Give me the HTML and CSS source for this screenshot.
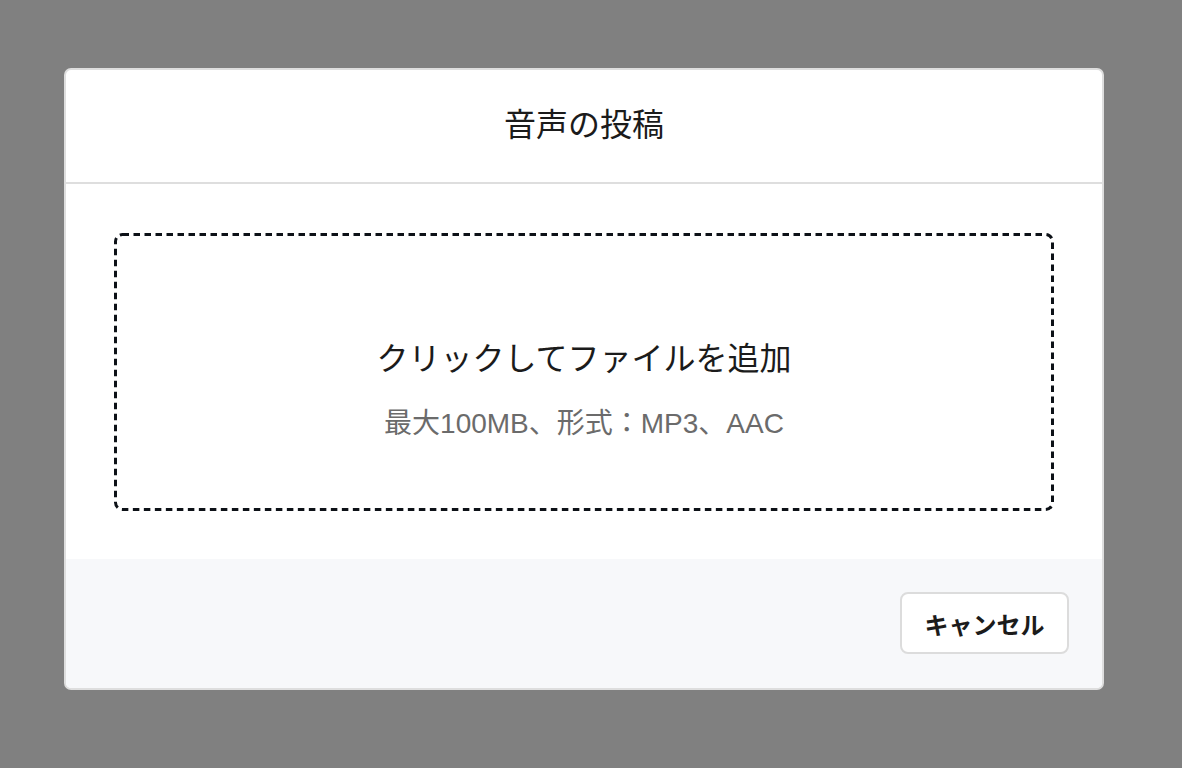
FILE: index.html
```html
<!DOCTYPE html>
<html lang="ja">
<head>
<meta charset="utf-8">
<title>音声の投稿</title>
<link rel="stylesheet" href="styles.css">
</head>
<body>
<div class="modal">
  <div class="modal-header">音声の投稿</div>
  <div class="modal-body">
    <div class="drop">
      <svg class="drop-border" width="940" height="278" viewBox="0 0 940 278" aria-hidden="true">
        <rect x="1.5" y="1.5" width="937" height="275" rx="7" ry="7" fill="none" stroke="#0d1117" stroke-width="3" stroke-dasharray="6.5 4.5"/>
      </svg>
      <div class="drop-title">クリックしてファイルを追加</div>
      <div class="drop-sub">最大100MB、形式：MP3、AAC</div>
    </div>
  </div>
  <div class="modal-footer">
    <button class="btn">キャンセル</button>
  </div>
</div>
</body>
</html>
```
FILE: styles.css
```css
html, body {
  margin: 0;
  padding: 0;
}
body {
  background: #808080;
  width: 1182px;
  height: 768px;
  overflow: hidden;
  font-family: "Liberation Sans", "Noto Sans CJK JP", sans-serif;
  color: #1b1b1b;
}
.modal {
  box-sizing: border-box;
  margin: 68px 0 0 64px;
  width: 1040px;
  height: 622px;
  background: #ffffff;
  border: 2px solid #dedede;
  border-radius: 7px;
  overflow: hidden;
  display: flex;
  flex-direction: column;
}
.modal-header {
  box-sizing: border-box;
  height: 114px;
  padding-bottom: 8px;
  border-bottom: 2px solid #dedede;
  display: flex;
  align-items: center;
  justify-content: center;
  font-size: 32px;
  font-family: "Noto Sans CJK JP", sans-serif;
  color: #1b1b1b;
}
.modal-body {
  padding: 49px 48px 48px 48px;
}
.drop {
  box-sizing: border-box;
  position: relative;
  width: 940px;
  height: 278px;
  padding-top: 103px;
  display: flex;
  flex-direction: column;
  align-items: center;
}
.drop-border {
  position: absolute;
  left: 0;
  top: 0;
}
.drop-title {
  font-family: "Noto Sans CJK JP", sans-serif;
  font-size: 32px;
  line-height: 40px;
  color: #1b1b1b;
}
.drop-sub {
  margin-top: 30px;
  font-size: 28px;
  line-height: 36px;
  color: #6b6b6b;
}
.modal-footer {
  flex: 1;
  background: #f7f8fa;
  display: flex;
  justify-content: flex-end;
  align-items: flex-start;
  padding: 33px 33px 0 0;
}
.btn {
  box-sizing: border-box;
  width: 169px;
  height: 62px;
  background: #ffffff;
  border: 2px solid #dcdcdc;
  border-radius: 8px;
  font-family: "Noto Sans CJK JP", sans-serif;
  font-weight: 700;
  font-size: 24px;
  color: #1b1b1b;
  padding: 0;
}
```
